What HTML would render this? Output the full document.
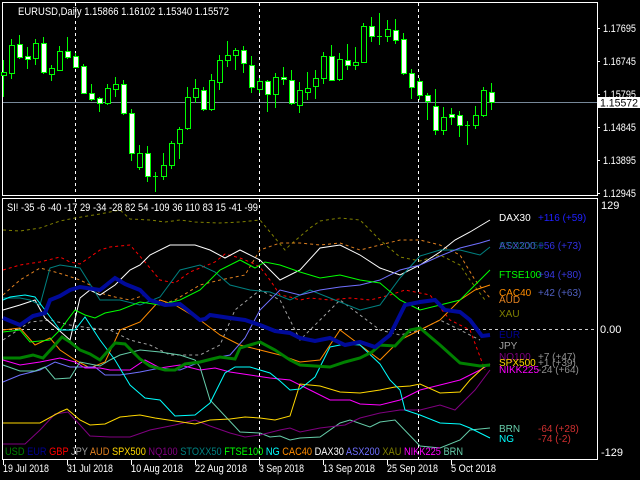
<!DOCTYPE html>
<html><head><meta charset="utf-8">
<style>
html,body{margin:0;padding:0;background:#000;}
svg{display:block;font-family:"Liberation Sans",sans-serif;font-size:10px;}
</style></head><body>
<svg id="s" width="640" height="480" xmlns="http://www.w3.org/2000/svg">
<rect width="640" height="480" fill="#000"/>
<rect x="2.5" y="2.5" width="595" height="193" fill="none" stroke="#fff"/>
<rect x="2.5" y="198.5" width="595" height="261" fill="none" stroke="#fff"/>
<line x1="3" y1="102.5" x2="597" y2="102.5" stroke="#778899"/>
<g stroke="#fff" stroke-dasharray="3,3">
<line x1="75.5" y1="3" x2="75.5" y2="195"/><line x1="259.5" y1="3" x2="259.5" y2="195"/><line x1="418.5" y1="3" x2="418.5" y2="195"/>
<line x1="75.5" y1="199" x2="75.5" y2="459"/><line x1="259.5" y1="199" x2="259.5" y2="459"/><line x1="418.5" y1="199" x2="418.5" y2="459"/>
<line x1="3" y1="329.5" x2="597" y2="329.5" stroke="#ccc"/>
</g>
<g id="candles"></g>
<g id="lines" fill="none"></g>
<text x="18" y="15" fill="#fff" font-size="11" textLength="211" lengthAdjust="spacingAndGlyphs">EURUSD,Daily  1.15866 1.16102 1.15340 1.15572</text>
<text x="7" y="211" fill="#fff" font-size="11" textLength="251" lengthAdjust="spacingAndGlyphs">SI! -35 -6 -40 -17 29 -34 -28 82 54 -109 36 110 83 15 -41 -99</text>
<g fill="#fff" font-size="11">
<text x="603" y="32" textLength="33" lengthAdjust="spacingAndGlyphs">1.17695</text><text x="603" y="65" textLength="33" lengthAdjust="spacingAndGlyphs">1.16745</text><text x="603" y="98" textLength="33" lengthAdjust="spacingAndGlyphs">1.15795</text>
<text x="603" y="131" textLength="33" lengthAdjust="spacingAndGlyphs">1.14845</text><text x="603" y="164" textLength="33" lengthAdjust="spacingAndGlyphs">1.13895</text><text x="603" y="197" textLength="33" lengthAdjust="spacingAndGlyphs">1.12945</text>
<text x="601" y="209">129</text><text x="600" y="333">0.00</text><text x="601" y="456">-129</text>
</g>
<g stroke="#fff"><line x1="597" y1="28.5" x2="600" y2="28.5"/><line x1="597" y1="61.5" x2="600" y2="61.5"/><line x1="597" y1="94.5" x2="600" y2="94.5"/><line x1="597" y1="127.5" x2="600" y2="127.5"/><line x1="597" y1="160.5" x2="600" y2="160.5"/><line x1="597" y1="193.5" x2="600" y2="193.5"/></g>
<rect x="598" y="97" width="42" height="11" fill="#fff"/>
<text x="600" y="106.5" fill="#000" font-size="11" textLength="38" lengthAdjust="spacingAndGlyphs">1.15572</text>
<text x="499" y="221" fill="#fff">DAX30</text><text x="538" y="221" fill="#2020ff">+116 (+59)</text>
<text x="499" y="249" fill="#5050d0">ASX200</text><text x="499" y="249" fill="#008080" opacity="0.6">STOXX50</text><text x="538" y="249" fill="#3030e0">+56 (+73)</text>
<text x="499" y="278" fill="#00ff00">FTSE100</text><text x="538" y="278" fill="#3838e0">+94 (+80)</text>
<text x="499" y="296" fill="#ff8c00">CAC40</text><text x="538" y="296" fill="#5060c0">+42 (+63)</text>
<text x="499" y="303" fill="#e08020">AUD</text>
<text x="499" y="317" fill="#808000">XAU</text>
<text x="499" y="338" fill="#000090">EUR</text>
<text x="499" y="349" fill="#a0a0a0">JPY</text>
<text x="499" y="360" fill="#800080">NQ100</text><text x="538" y="360" fill="#909090">+7 (+47)</text>
<text x="499" y="366" fill="#ffd700">SPX500</text><text x="538" y="366" fill="#909090">+1 (+39)</text>
<text x="499" y="373" fill="#ff00ff">NIKK225</text><text x="538" y="373" fill="#909090">-24 (+64)</text>
<text x="499" y="432" fill="#66cdaa">BRN</text><text x="538" y="432" fill="#d03030">-64 (+28)</text>
<text x="499" y="442" fill="#00ffff">NG</text><text x="538" y="442" fill="#d03030">-74 (-2)</text>
<text x="5" y="455" font-size="11" textLength="458" lengthAdjust="spacingAndGlyphs"><tspan fill="#008000">USD </tspan><tspan fill="#000090">EUR </tspan><tspan fill="#ff0000">GBP </tspan><tspan fill="#a0a0a0">JPY </tspan><tspan fill="#e08020">AUD </tspan><tspan fill="#ffd700">SPX500 </tspan><tspan fill="#800080">NQ100 </tspan><tspan fill="#008080">STOXX50 </tspan><tspan fill="#00ff00">FTSE100 </tspan><tspan fill="#00ffff">NG </tspan><tspan fill="#ff8c00">CAC40 </tspan><tspan fill="#fff">DAX30 </tspan><tspan fill="#7070ff">ASX200 </tspan><tspan fill="#808000">XAU </tspan><tspan fill="#ff00ff">NIKK225 </tspan><tspan fill="#66cdaa">BRN</tspan></text>
<g stroke="#fff"><line x1="3.5" y1="460" x2="3.5" y2="465"/><line x1="67.5" y1="460" x2="67.5" y2="465"/><line x1="131.5" y1="460" x2="131.5" y2="465"/><line x1="195.5" y1="460" x2="195.5" y2="465"/><line x1="259.5" y1="460" x2="259.5" y2="465"/><line x1="323.5" y1="460" x2="323.5" y2="465"/><line x1="387.5" y1="460" x2="387.5" y2="465"/><line x1="451.5" y1="460" x2="451.5" y2="465"/></g>
<g fill="#fff" font-size="11">
<text x="3" y="472" textLength="46" lengthAdjust="spacingAndGlyphs">19 Jul 2018</text><text x="67" y="472" textLength="46" lengthAdjust="spacingAndGlyphs">31 Jul 2018</text><text x="131" y="472" textLength="52" lengthAdjust="spacingAndGlyphs">10 Aug 2018</text><text x="195" y="472" textLength="52" lengthAdjust="spacingAndGlyphs">22 Aug 2018</text>
<text x="259" y="472" textLength="45" lengthAdjust="spacingAndGlyphs">3 Sep 2018</text><text x="323" y="472" textLength="52" lengthAdjust="spacingAndGlyphs">13 Sep 2018</text><text x="387" y="472" textLength="51" lengthAdjust="spacingAndGlyphs">25 Sep 2018</text><text x="451" y="472" textLength="45" lengthAdjust="spacingAndGlyphs">5 Oct 2018</text>
</g>
</svg>
<script>
var C=[[3,72,75,60,97,0],[11,45,73,39,79,0],[19,44,57,35,59,1],[27,56,59,47,69,1],[35,43,58,39,65,0],[43,43,72,37,74,1],[51,68,74,65,81,0],[59,51,70,46,71,0],[67,51,57,37,59,1],[75,56,67,53,68,1],[83,66,93,64,94,1],[91,93,99,84,101,1],[99,98,103,97,112,1],[107,88,103,84,105,0],[115,84,89,77,97,0],[123,84,113,80,115,1],[131,113,153,109,161,1],[139,153,167,145,170,0],[147,153,176,146,182,1],[155,176,176,172,192,0],[163,165,176,153,180,0],[171,143,165,141,169,0],[179,129,143,127,159,0],[187,97,128,87,130,0],[195,88,97,79,103,0],[203,90,109,87,111,1],[211,80,109,74,111,0],[219,60,82,55,90,0],[227,55,60,41,67,0],[235,50,55,48,70,0],[243,50,63,46,73,1],[251,65,87,56,93,1],[259,81,89,78,93,0],[267,81,94,80,112,1],[275,77,94,73,108,0],[283,77,79,67,85,1],[291,80,103,70,105,1],[299,90,105,82,113,0],[307,88,92,72,100,0],[315,78,86,70,99,0],[323,56,78,52,84,0],[331,56,80,45,81,1],[339,59,79,53,81,0],[347,60,65,44,70,1],[355,62,65,47,70,0],[363,26,62,23,63,0],[371,26,36,17,42,1],[379,36,36,13,45,0],[387,29,36,20,42,0],[395,30,40,19,44,1],[403,39,73,33,75,1],[411,73,87,69,99,1],[419,81,95,78,100,1],[427,95,101,93,120,1],[435,106,130,89,135,1],[443,117,130,107,135,0],[451,114,117,108,125,1],[459,115,125,111,137,1],[467,125,125,121,145,0],[475,115,125,106,129,0],[483,90,115,87,117,0],[491,92,102,83,110,1]];
var g=document.getElementById('candles'),h='';
C.forEach(function(c){var x=c[0];h+='<line x1="'+(x+.5)+'" y1="'+c[3]+'" x2="'+(x+.5)+'" y2="'+c[4]+'" stroke="#00ff00"/>';
if(c[2]-c[1]<1){h+='<line x1="'+(x-2)+'" y1="'+(c[1]+.5)+'" x2="'+(x+3)+'" y2="'+(c[1]+.5)+'" stroke="#00ff00"/>';}
else h+='<rect x="'+(x-2+.5)+'" y="'+(c[1]+.5)+'" width="5" height="'+(c[2]-c[1])+'" fill="'+(c[5]?'#fff':'#000')+'" stroke="#00ff00"/>';});
g.innerHTML=h;
function P(a){var s='';for(var i=0;i<a.length;i+=2)s+=a[i]+','+a[i+1]+' ';return s;}
var L=[
['#808000',1,'3,3',[3,230,20,231,40,228,60,221,75,218,100,214,120,210,130,219,150,220,165,222,180,220,195,222,220,223,240,222,260,220,270,232,285,250,290,245,310,228,320,221,340,218,360,220,380,240,400,257,420,261,440,255,460,265,470,280,485,300]],
['#ff0000',1,'3,3',[3,270,20,265,40,262,60,257,70,262,80,264,100,250,110,247,130,245,145,262,160,280,175,283,190,272,200,268,215,262,225,254,240,258,250,262,260,267,270,280,280,295,290,297,300,300,310,298,330,300,350,298,370,300,390,295,405,290,430,295,450,320,470,330,485,370]],
['#e08020',1,'3,3',[3,295,20,280,40,268,55,272,65,275,80,280,90,285,100,293,115,297,130,300,145,295,160,305,175,300,200,285,220,280,245,275,260,250,280,243,300,243,320,245,340,243,360,250,380,245,400,240,420,240,440,245,460,255,475,280,490,298]],
['#a0a0a0',1,'3,3',[3,340,30,322,50,320,70,325,90,328,110,330,130,340,150,345,170,355,200,355,220,345,235,310,260,290,280,300,300,340,320,320,340,300,360,315,380,330,400,335,420,330,440,320,460,330,480,340]],
['#ff8c00',1,'',[3,330,20,328,35,345,50,338,60,350,75,360,90,368,105,362,120,330,140,322,160,300,175,305,200,320,220,335,240,345,260,350,280,355,300,362,320,360,340,330,360,345,380,360,400,340,420,330,440,320,460,300,475,290,490,285]],
['#fff',1,'',[3,310,20,305,35,300,45,318,70,340,80,298,90,290,100,295,115,285,130,270,140,265,150,255,170,245,185,245,195,245,210,250,225,258,240,250,260,260,280,280,300,270,320,248,340,245,360,255,380,268,400,275,420,265,440,252,455,240,470,232,490,220]],
['#008080',1,'',[3,298,20,298,30,300,40,305,50,268,60,265,80,268,100,300,120,300,140,305,160,297,180,270,200,265,215,272,230,285,250,290,270,292,290,300,310,290,330,298,360,310,380,305,400,278,420,256,440,250,460,250,480,255,490,247]],
['#7070ff',1,'',[3,382,20,375,40,370,55,362,70,367,80,367,95,367,105,375,120,375,140,372,160,368,180,370,200,362,215,358,230,355,245,338,260,310,280,290,300,295,320,290,340,287,360,285,380,280,400,270,420,265,440,256,460,248,480,243,490,240]],
['#00ff00',1,'',[3,332,20,330,30,342,50,340,60,330,75,310,85,315,95,318,105,313,120,310,140,302,160,305,180,300,200,290,220,270,240,260,255,268,265,262,280,265,300,272,320,278,340,275,360,280,380,283,400,300,420,310,440,305,460,300,480,280,490,270]],
['#ff00ff',1,'',[3,360,20,365,40,362,60,358,75,362,85,368,100,368,110,370,130,370,145,360,160,368,180,365,200,370,215,368,230,372,250,375,270,378,290,380,310,390,330,400,350,400,360,404,380,405,400,400,420,390,440,385,460,380,480,370,490,364]],
['#66cdaa',1,'',[3,365,20,371,35,371,45,367,55,379,70,378,80,362,100,366,110,360,120,355,140,350,160,352,180,355,195,360,200,367,210,400,240,432,260,433,270,437,280,436,290,440,300,438,320,437,340,423,350,420,370,427,380,422,395,420,420,446,440,448,460,440,470,430,490,428]],
['#800080',1,'',[3,444,25,444,40,430,55,414,68,412,80,425,90,436,110,437,130,437,150,430,175,425,195,420,210,426,230,433,245,437,260,435,280,430,290,428,300,432,320,428,345,425,360,418,380,413,400,410,420,410,440,405,455,410,475,390,490,370]],
['#ffd700',1,'',[3,423,40,423,60,412,67,409,80,420,90,425,105,424,120,417,140,415,155,418,175,421,195,424,210,420,230,419,245,417,260,418,275,420,290,416,300,384,320,386,340,392,360,393,380,390,395,387,410,386,420,384,440,393,460,392,470,380,485,366,490,364]],
['#00ffff',1,'',[3,300,10,297,25,295,35,297,45,310,60,330,75,330,85,317,100,340,115,360,130,385,145,398,160,400,175,416,195,415,210,403,225,373,235,367,250,367,260,370,270,373,280,381,290,390,300,389,315,377,330,347,345,344,360,345,380,364,390,380,400,390,405,410,420,415,440,423,460,424,470,428,490,438]],
['#008000',3,'',[3,358,20,358,33,355,43,358,55,345,62,337,70,342,80,350,90,354,100,360,115,343,125,344,140,359,150,366,165,370,175,370,185,364,200,362,212,359,220,357,235,359,240,348,260,342,275,350,290,360,300,365,315,366,330,367,345,362,360,358,372,352,380,345,395,346,410,330,420,328,440,345,460,363,480,366,490,365]],
['#000a9a',4,'',[3,318,20,325,33,316,45,313,50,300,60,296,70,290,80,287,100,290,115,278,125,284,140,290,150,300,165,305,180,304,200,320,205,319,210,315,230,318,245,320,260,325,270,329,275,331,290,333,300,338,315,341,330,338,345,345,360,342,375,347,390,335,405,305,420,302,435,300,445,310,460,312,470,320,482,336,490,335]]
];
var lh='';L.forEach(function(l){lh+='<polyline points="'+P(l[3])+'" stroke="'+l[0]+'" stroke-width="'+l[1]+'"'+(l[2]?' stroke-dasharray="'+l[2]+'"':'')+'/>';});
document.getElementById('lines').innerHTML=lh;
</script>
</body></html>
